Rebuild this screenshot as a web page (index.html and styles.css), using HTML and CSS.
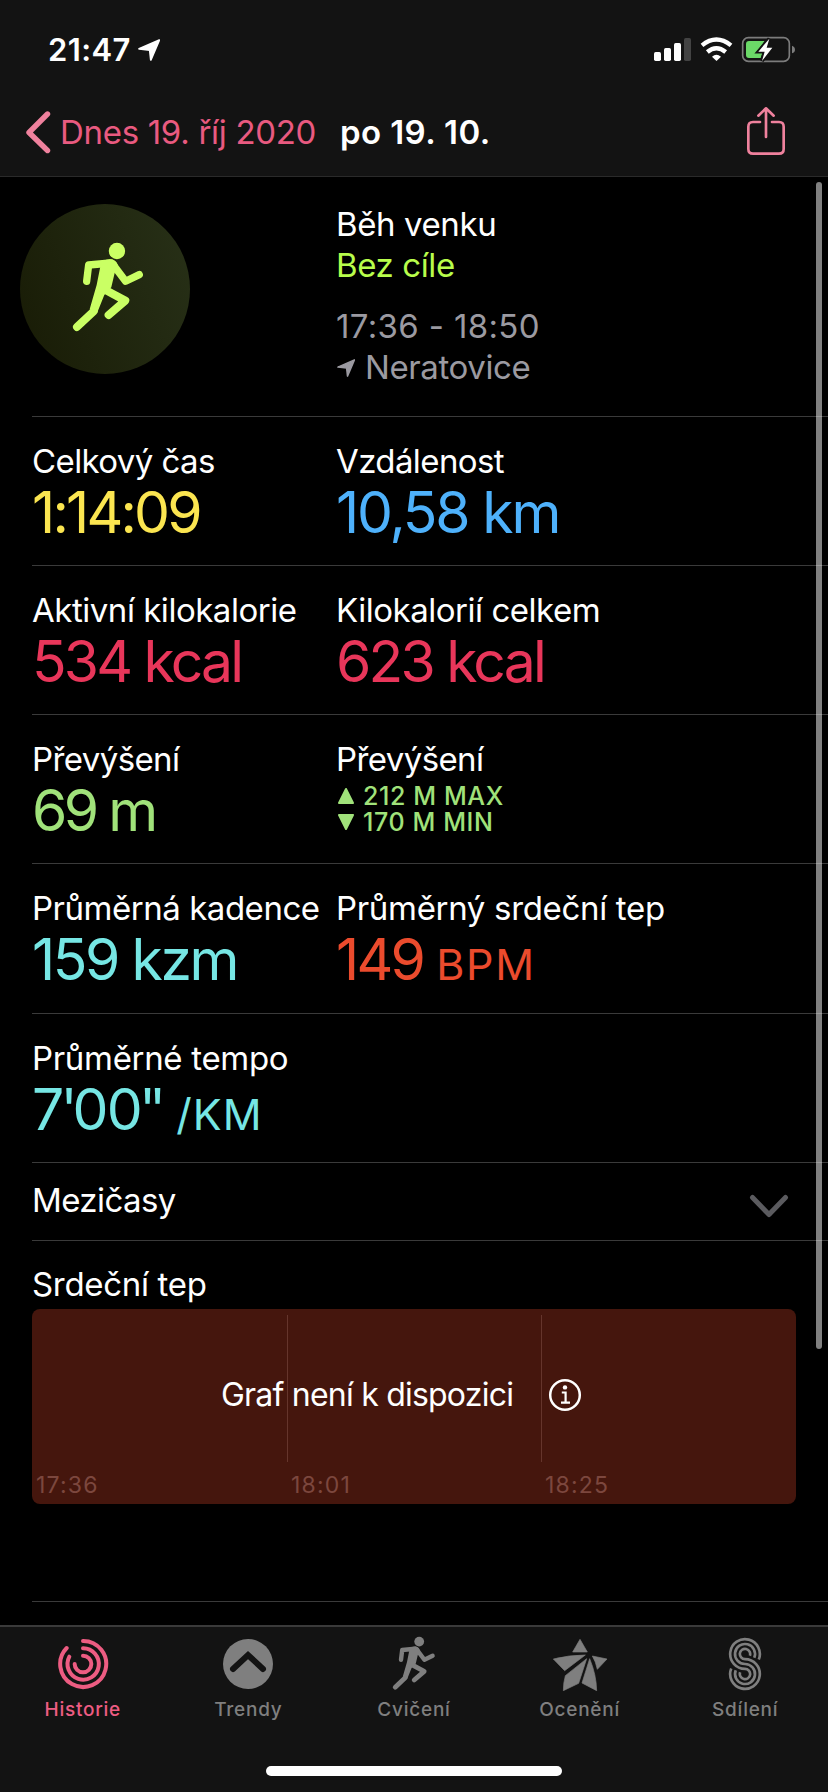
FILE: index.html
```html
<!DOCTYPE html>
<html lang="cs">
<head>
<meta charset="utf-8">
<title>po 19. 10.</title>
<link rel="stylesheet" href="styles.css">
</head>
<body>
<svg class="defs" width="0" height="0">
  <symbol id="runner" viewBox="210 150 230 280">
    <g fill="none" stroke="currentColor" stroke-linecap="round" stroke-linejoin="round">
      <path stroke-width="22" d="M260 274 266 225 332 219 M338 222 377 274 418 254"/>
      <path stroke-width="24" d="M318 301 376 332 326 375 M231 411 281 364"/>
    </g>
    <circle cx="351" cy="183" r="24.5" fill="currentColor"/>
    <path fill="currentColor" d="M302 225 Q306 209 330 208 Q348 208 354 226 L344 250 334 292 313 315 292 368 269 358 290 285Z"/>
  </symbol>
  <symbol id="arrow" viewBox="0 0 60 60">
    <path d="M3 27 58 3 35 57 32 30Z" fill="currentColor" stroke="currentColor" stroke-width="5" stroke-linejoin="round"/>
  </symbol>
</svg>

<div class="screen">
  <header class="top">
    <div class="status">
      <div class="clock"><span>21:47</span><svg class="clock-arrow"><use href="#arrow"/></svg></div>
      <svg class="status-icons" width="142" height="27" viewBox="696 108 426 81">
        <g fill="#fff">
          <rect x="699" y="156" width="21" height="27" rx="5"/>
          <rect x="729" y="144" width="21" height="39" rx="5"/>
          <rect x="759" y="129" width="21" height="54" rx="5"/>
          <rect x="789" y="114" width="21" height="69" rx="5" fill="#434343"/>
          <path d="M873 170 Q886 159 900 170 L886.500 183Z"/>
        </g>
        <g fill="none" stroke="#fff" stroke-width="13">
          <path d="M843 136 Q886 101 930 136"/>
          <path d="M859 156 Q886 133 914 156"/>
        </g>
        <rect x="965" y="113" width="140" height="71" rx="17" fill="none" stroke="#7c7c7c" stroke-width="5"/>
        <path d="M1113 137 Q1122 140 1122 149 Q1122 157 1113 160Z" fill="#7c7c7c"/>
        <path d="M984 123 H1031 L1004 159 H1024 L1019 174 H984 Q975 174 975 165 V132 Q975 123 984 123Z" fill="#6bd968"/>
        <path d="M1045 116 1012 155 H1031 L1023 183 1054 143 H1037Z" fill="#fff" stroke="#131313" stroke-width="11" paint-order="stroke"/>
      </svg>
    </div>
    <nav class="nav">
      <a class="back">
        <svg width="26" height="44" viewBox="0 0 26 44"><path d="M22.500 4 4 22.500 22.500 40.500" fill="none" stroke="#ef819d" stroke-width="5.400" stroke-linecap="round" stroke-linejoin="round"/></svg>
        <span>Dnes 19. říj 2020</span>
      </a>
      <h1 class="title">po 19. 10.</h1>
      <svg class="share" width="40" height="50" viewBox="975 318 120 150"><path d="M1017 366 H996 Q982 366 982 380 V447 Q982 461 996 461 H1074 Q1088 461 1088 447 V380 Q1088 366 1074 366 H1053 M1035 411 V326 M1012 347 1035 325 1058 347" fill="none" stroke="#ef819d" stroke-width="8" stroke-linecap="round" stroke-linejoin="round"/></svg>
    </nav>
  </header>

  <main class="content">
    <section class="summary">
      <div class="badge"><svg width="76.600" height="93.300"><use href="#runner"/></svg></div>
      <div class="facts">
        <div>Běh venku</div>
        <div class="goal">Bez cíle</div>
        <div class="when">17:36 - 18:50</div>
        <div class="where"><svg class="where-arrow"><use href="#arrow"/></svg>Neratovice</div>
      </div>
    </section>

    <section class="row">
      <div><div class="label snug">Celkový čas</div><div class="value yellow time">1:14:09</div></div>
      <div><div class="label snug">Vzdálenost</div><div class="value blue dist">10,58 km</div></div>
    </section>
    <section class="row">
      <div><div class="label">Aktivní kilokalorie</div><div class="value red">534 kcal</div></div>
      <div><div class="label">Kilokalorií celkem</div><div class="value red">623 kcal</div></div>
    </section>
    <section class="row">
      <div><div class="label snug">Převýšení</div><div class="value green climb">69 m</div></div>
      <div>
        <div class="label snug">Převýšení</div>
        <div class="range green">
          <div><svg width="18" height="18" viewBox="0 0 18 18"><path d="M9 2 16 16H2Z"/></svg>212 M MAX</div>
          <div><svg width="18" height="18" viewBox="0 0 18 18"><path d="M9 16 16 2H2Z"/></svg>170 M MIN</div>
        </div>
      </div>
    </section>
    <section class="row tall">
      <div><div class="label">Průměrná kadence</div><div class="value cyan cadence">159 kzm</div></div>
      <div><div class="label wide">Průměrný srdeční tep</div><div class="value orange">149 <span class="unit">BPM</span></div></div>
    </section>
    <section class="row">
      <div><div class="label wide">Průměrné tempo</div><div class="value cyan pace">7<i>'</i>00<i>'</i><i>'</i> <span class="unit">/KM</span></div></div>
    </section>
    <section class="splits">
      <div class="label snug">Mezičasy</div>
      <svg width="40" height="24" viewBox="0 0 40 24"><path d="M3.500 3.500 20 20.500 36.500 3.500" fill="none" stroke="#5b5b5f" stroke-width="5" stroke-linecap="round" stroke-linejoin="round"/></svg>
    </section>
    <section class="heart">
      <div class="label wide">Srdeční tep</div>
      <div class="chart">
        <div class="lane"><span>17:36</span></div>
        <div class="lane"><span>18:01</span></div>
        <div class="lane"><span>18:25</span></div>
        <div class="notice">
          <span>Graf není k dispozici</span>
          <svg width="34" height="34" viewBox="0 0 34 34" fill="none" stroke="#fff"><circle cx="17" cy="17" r="14.800" stroke-width="2.500"/><circle cx="17" cy="9.400" r="2.200" fill="#fff" stroke="none"/><path d="M13.800 14.500H17.600V24.500 M13 24.700H22" stroke-width="2.200"/></svg>
        </div>
      </div>
    </section>
  </main>

  <footer class="tabs">
    <div class="tab active">
      <svg width="52" height="54" viewBox="171 171 156 162" fill="none" stroke="currentColor" stroke-width="12" stroke-linecap="round"><path d="M249 183 A69 69 0 1 1 200 204"/><path d="M249 205 A47 47 0 1 1 208 230"/><path d="M249 227 A25 25 0 1 1 224 252"/></svg>
      <span>Historie</span>
    </div>
    <div class="tab">
      <svg width="52" height="54" viewBox="666 171 156 162"><circle cx="744" cy="252" r="75" fill="currentColor"/><path d="M699 267 744 225 789 267" fill="none" stroke="#131313" stroke-width="18" stroke-linecap="round"/></svg>
      <span>Trendy</span>
    </div>
    <div class="tab">
      <svg width="46" height="56"><use href="#runner"/></svg>
      <span>Cvičení</span>
    </div>
    <div class="tab">
      <svg width="56" height="54" viewBox="543 171 168 162" fill="currentColor" stroke="currentColor" stroke-width="2" stroke-linejoin="round"><path d="M627 178 649 216H605Z"/><path d="M547 237 Q594 225 643 225 L581 272Z"/><path d="M647 236 623 310 577 332 Q577 308 583 287Z"/><path d="M656 236 Q676 284 677 332 L633 309Z"/><path d="M664 228 708 237 679 268 Q674 244 664 228Z"/></svg>
      <span>Ocenění</span>
    </div>
    <div class="tab">
      <svg width="36" height="54" viewBox="1068 171 108 162" fill="none" stroke="currentColor" stroke-width="8"><path d="M1163.300 238.700 A44.500 44.500 0 1 0 1122 266.500 A15.500 15.500 0 1 1 1107.400 276.700"/><path d="M1149.800 233.200 A30 30 0 1 0 1122 252 A30 30 0 1 1 1094.200 270.800"/><path d="M1136.600 227.300 A15.500 15.500 0 1 0 1122 237.500 A44.500 44.500 0 1 1 1080.700 265.300"/></svg>
      <span>Sdílení</span>
    </div>
  </footer>
  <div class="home"></div>
  <div class="scrollbar"></div>
</div>
</body>
</html>
```

FILE: styles.css
```css
* { box-sizing: border-box; }
body {
  margin: 0;
  background: #000;
  color: #fff;
  font: 400 33px/41px Inter, "Liberation Sans", sans-serif;
  letter-spacing: -0.4px;
}
svg { display: block; flex: none; }
.defs { position: absolute; }
.screen {
  position: relative;
  width: 828px;
  height: 1792px;
  display: flex;
  flex-direction: column;
  overflow: hidden;
}

/* Header */
.top {
  height: 177px;
  background: #131313;
  border-bottom: 1px solid #2a2a2a;
}
.status {
  height: 88px;
  padding: 11px 33px 0 48px;
  display: flex;
  justify-content: space-between;
  align-items: center;
}
.clock {
  display: flex;
  align-items: center;
  gap: 7px;
  font-size: 31px;
  font-weight: 600;
  letter-spacing: 0.4px;
}
.clock-arrow { width: 22px; height: 22px; }
.nav {
  height: 88px;
  padding: 0 42px 0 25px;
  display: flex;
  align-items: center;
}
.back {
  width: 315px;
  display: flex;
  align-items: center;
  gap: 9px;
  color: #e95a80;
  letter-spacing: -0.3px;
}
.title {
  margin: 0;
  flex: 1;
  font-size: 33px;
  font-weight: 600;
  letter-spacing: 0.4px;
}
.share { margin-bottom: 2px; }

/* Workout summary */
.content { height: 1448px; overflow: hidden; }
.summary {
  height: 239px;
  padding: 27px 0 0 20px;
  display: grid;
  grid-template-columns: 316px 1fr;
}
.badge {
  width: 170px;
  height: 170px;
  border-radius: 50%;
  background: linear-gradient(70deg, #181b05, #283118);
  color: #caff64;
  padding: 36px 0 0 50px;
}
.goal { color: #b8fd4b; }
.when { margin-top: 20px; color: #9b9aa1; letter-spacing: 0.35px; }
.where {
  display: flex;
  align-items: center;
  gap: 10px;
  color: #9b9aa1;
}
.where-arrow { width: 18px; height: 20px; margin-left: 1px; }

/* Metric rows */
.row {
  height: 149px;
  margin-left: 32px;
  padding-top: 23px;
  border-top: 1px solid #3a3a3a;
  display: grid;
  grid-template-columns: 304px 1fr;
}
.tall { height: 150px; }
.label { line-height: 42px; white-space: nowrap; letter-spacing: -0.47px; }
.label.snug { letter-spacing: -0.6px; }
.label.wide { letter-spacing: -0.32px; }
.value {
  font-size: 57px;
  line-height: 62px;
  letter-spacing: -2.8px;
  white-space: nowrap;
}
.dist { letter-spacing: -2.15px; }
.climb { letter-spacing: -3.5px; }
.cadence { letter-spacing: -2.4px; }
.unit { font-size: 43px; letter-spacing: 1.7px; }
.pace { letter-spacing: -1.8px; }
.pace i { font-style: normal; letter-spacing: -5px; margin-left: -2px; }
.pace .unit { margin-left: 1px; letter-spacing: 1px; }
.yellow { color: #fbe550; }
.blue { color: #4eb1fb; }
.red { color: #e8365a; }
.green { color: #a0e27a; }
.cyan { color: #76e6e4; }
.orange { color: #eb4b2d; }
.range {
  font-size: 25px;
  font-weight: 500;
  line-height: 26px;
  letter-spacing: 0.6px;
  padding-top: 3px;
}
.range > div { display: flex; align-items: center; gap: 8px; }
.range svg { margin-left: 1px; fill: currentColor; stroke: currentColor; stroke-width: 2; stroke-linejoin: round; }

/* Splits and heart rate */
.splits {
  height: 78px;
  margin-left: 32px;
  padding: 0 39px 4px 0;
  border-top: 1px solid #3a3a3a;
  display: flex;
  align-items: center;
  justify-content: space-between;
}
.splits svg { margin-top: 12px; }
.heart {
  height: 362px;
  margin-left: 32px;
  padding-top: 22px;
  border-top: 1px solid #3a3a3a;
  border-bottom: 1px solid #3a3a3a;
}
.chart {
  position: relative;
  width: 764px;
  height: 195px;
  margin-top: 4px;
  padding-top: 6px;
  border-radius: 8px;
  background: #45160d;
  display: grid;
  grid-template-columns: 255px 254px 1fr;
}
.lane {
  position: relative;
  padding: 158px 0 0 4px;
  font-size: 23px;
  line-height: 24px;
  letter-spacing: 1.2px;
  color: #7c473e;
}
.lane + .lane::before {
  content: "";
  position: absolute;
  left: 0;
  top: 0;
  width: 1px;
  height: 147px;
  background: #65352c;
}
.notice {
  position: absolute;
  left: 189px;
  top: 65px;
  display: flex;
  align-items: center;
  gap: 35px;
  font-size: 32px;
  letter-spacing: -0.78px;
}

/* Tab bar */
.tabs {
  height: 167px;
  padding-top: 9px;
  border-top: 2px solid #3a3a3a;
  background: #131313;
  display: grid;
  grid-template-columns: repeat(5, 1fr);
  color: #7f7f7f;
}
.tab {
  display: flex;
  flex-direction: column;
  align-items: center;
  height: 86px;
  justify-content: flex-end;
  font-size: 19px;
  font-weight: 500;
  line-height: 24px;
  letter-spacing: 0.75px;
}
.tab svg { margin-bottom: 7px; }
.active { color: #ed5c82; }
.home {
  position: absolute;
  left: 266px;
  top: 1766px;
  width: 296px;
  height: 10px;
  border-radius: 5px;
  background: #fff;
}
.scrollbar {
  position: absolute;
  left: 816px;
  top: 182px;
  width: 6px;
  height: 1167px;
  border-radius: 3px;
  background: rgba(255, 255, 255, 0.5);
}
```
